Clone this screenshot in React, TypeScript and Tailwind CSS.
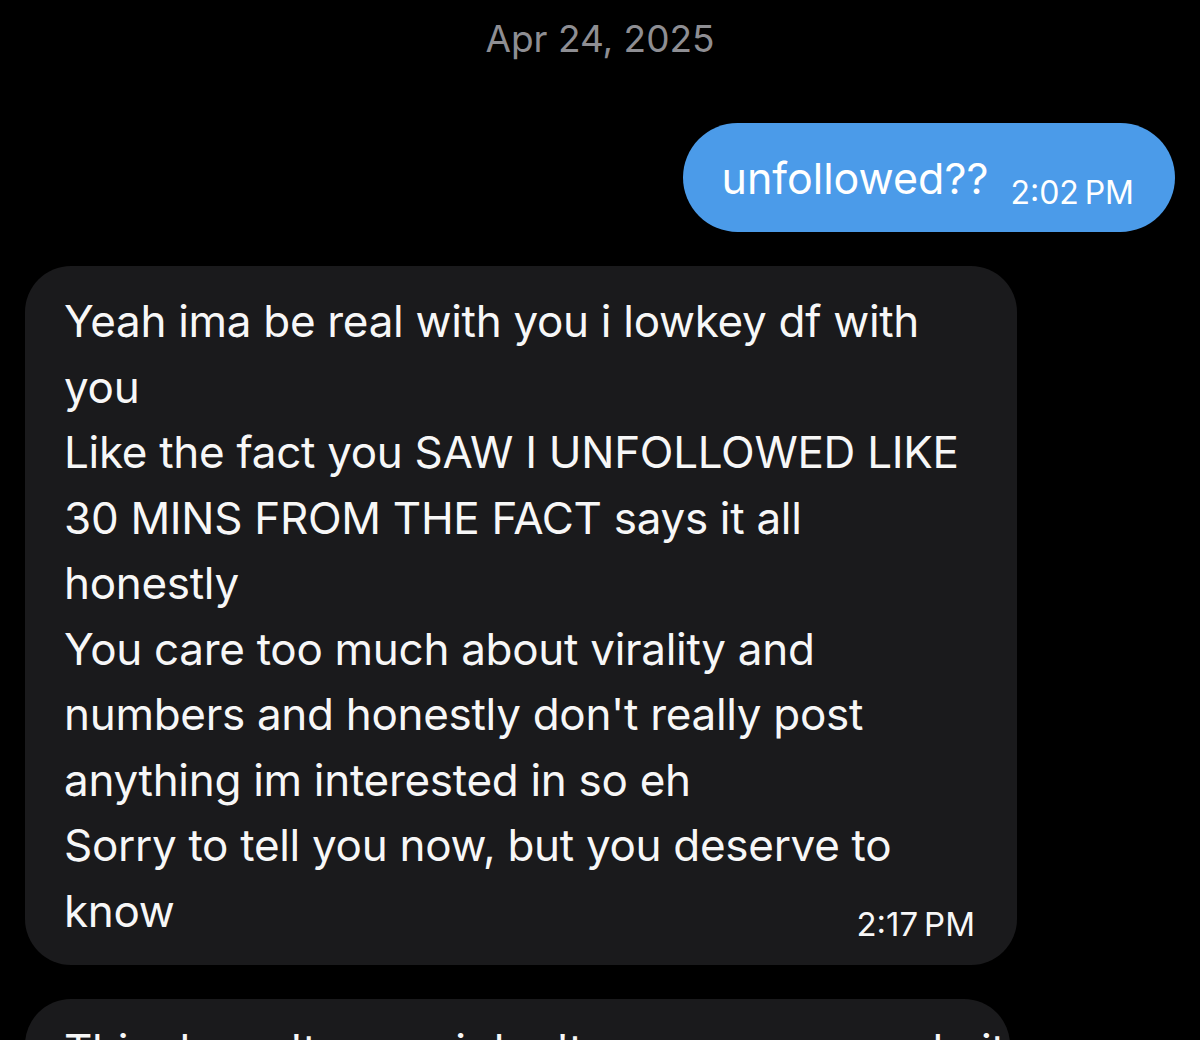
export default function App() {
  const lines = [
    "Yeah ima be real with you i lowkey df with",
    "you",
    "Like the fact you SAW I UNFOLLOWED LIKE",
    "30 MINS FROM THE FACT says it all",
    "honestly",
    "You care too much about virality and",
    "numbers and honestly don't really post",
    "anything im interested in so eh",
    "Sorry to tell you now, but you deserve to",
  ];
  return (
    <div className="w-[1200px] h-[1040px] bg-black overflow-hidden font-['Inter','Liberation_Sans',sans-serif] flex flex-col">
      <div className="shrink-0 pt-[17px] text-center text-[37px] leading-[44px] text-[#8e8e93]">Apr 24, 2025</div>
      <div className="shrink-0 mt-[62px] self-end mr-[25px] h-[109px] rounded-full bg-[#4b9be9] pl-[39px] pr-[41px] pt-[30px] flex items-start gap-[22px] text-white">
        <span className="text-[43px] leading-[50px] whitespace-nowrap">unfollowed??</span>
        <span className="mt-[21px] text-[32px] leading-[38px] whitespace-nowrap">2:02&#8239;PM</span>
      </div>
      <div className="shrink-0 mt-[34px] ml-[25px] w-[992px] rounded-[46px] bg-[#1a1a1c] pl-[39px] pr-[42px] pt-[23px] pb-[21px] text-[#f7f7f7] tracking-[-0.3px]">
        {lines.map((l, i) => (
          <div key={i} className="text-[44px] leading-[65.5px] whitespace-nowrap">{l}</div>
        ))}
        <div className="flex items-start justify-between">
          <span className="text-[44px] leading-[65.5px]">know</span>
          <span className="mt-[27px] text-[33px] leading-[37px] whitespace-nowrap tracking-normal">2:17&#8239;PM</span>
        </div>
      </div>
      <div className="shrink-0 mt-[34px] ml-[25px] w-[985px] rounded-[46px] bg-[#1a1a1c] pl-[39px] pr-[42px] pt-[19px] pb-[21px] text-[#f7f7f7] tracking-[-0.3px]">
        <div className="text-[44px] leading-[65.5px] whitespace-nowrap">This doesn't mean i don't wanna see you do it</div>
        <div className="text-[44px] leading-[65.5px] whitespace-nowrap">or anything</div>
      </div>
    </div>
  );
}
